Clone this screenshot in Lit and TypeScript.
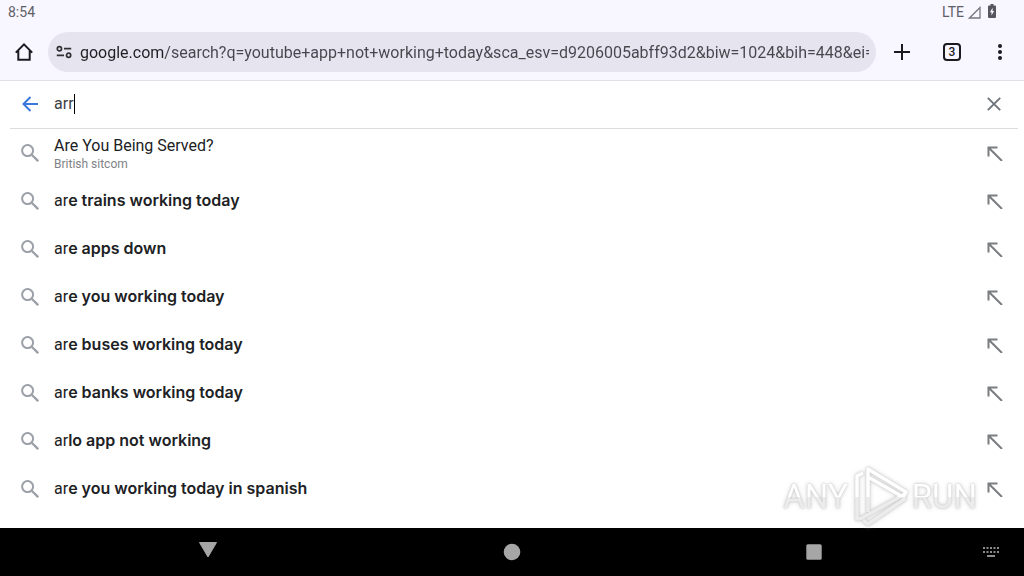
import { LitElement, html, css, svg } from "lit";
import { customElement, property } from "lit/decorators.js";

interface Suggestion {
  typed: string;
  rest: string;
  note?: string;
}

const SUGGESTIONS: Suggestion[] = [
  { typed: "Are You Being Served?", rest: "", note: "British sitcom" },
  { typed: "ar", rest: "e trains working today" },
  { typed: "ar", rest: "e apps down" },
  { typed: "ar", rest: "e you working today" },
  { typed: "ar", rest: "e buses working today" },
  { typed: "ar", rest: "e banks working today" },
  { typed: "ar", rest: "lo app not working" },
  { typed: "ar", rest: "e you working today in spanish" },
];

const buttonReset = css`
  *,
  *::before {
    box-sizing: border-box;
  }
  button {
    display: flex;
    align-items: center;
    justify-content: center;
    margin: 0;
    padding: 0;
    border: 0;
    background: none;
    color: inherit;
    font: inherit;
    cursor: pointer;
  }
  input {
    margin: 0;
    padding: 0;
    border: 0;
    outline: 0;
    background: none;
    font: inherit;
  }
  svg {
    display: block;
    flex: none;
  }
`;

@customElement("browser-bar")
export class BrowserBar extends LitElement {
  @property() url = "";

  static styles = [
    buttonReset,
    css`
      :host {
        display: block;
        background: #f8f6ff;
        color: #1b1b1f;
        font-family: Roboto, sans-serif;
        border-bottom: 1px solid #e1e0e7;
      }
      .status {
        display: flex;
        align-items: center;
        justify-content: space-between;
        height: 24px;
        padding: 0 28px 0 8px;
        font-size: 14px;
        line-height: 24px;
        color: #5f5e66;
      }
      .signals {
        display: flex;
        align-items: center;
        gap: 4px;
      }
      .battery {
        margin: 0 0 2px 3px;
      }
      .tools {
        display: flex;
        align-items: center;
        height: 56px;
      }
      .tool {
        width: 48px;
        height: 48px;
      }
      .actions {
        display: flex;
        gap: 2px;
        padding-left: 2px;
      }
      .menu {
        width: 46px;
        height: 48px;
        padding-right: 2px;
      }
      .address {
        flex: 1;
        min-width: 0;
        display: flex;
        align-items: center;
        height: 40px;
        padding-right: 7px;
        border-radius: 20px;
        background: #e6e4ee;
      }
      .site {
        width: 32px;
        height: 40px;
      }
      .url {
        flex: 1;
        min-width: 0;
        height: 25px;
        padding-top: 1px;
        font-size: 16px;
        line-height: 24px;
        color: #46464c;
        -webkit-text-fill-color: transparent;
        background: linear-gradient(to right, #1f1f23 83px, #46464c 83px);
        -webkit-background-clip: text;
        background-clip: text;
      }
      .tabs {
        width: 18px;
        height: 18px;
        border: 2px solid #1b1b1f;
        border-radius: 4px;
        font-size: 12px;
        font-weight: 500;
        line-height: 14px;
        text-align: center;
      }
    `,
  ];

  render() {
    return html`
      <div class="status">
        <span>8:54</span>
        <div class="signals">
          <span>LTE</span>
          <svg width="13" height="13" viewBox="0 0 13 13">
            <path d="M1.500 12 12 1.500V12Z" fill="none" stroke="#77767e" stroke-width="1.300" />
          </svg>
          <svg class="battery" width="8" height="14" viewBox="0 0 8 14">
            <path d="M2.500 0h3v1.500H7a1 1 0 0 1 1 1V13a1 1 0 0 1-1 1H1a1 1 0 0 1-1-1V2.500a1 1 0 0 1 1-1h1.500Z" fill="#57565d" />
            <path d="M4.600 3.800 1.900 8.300h1.600v3.200L6.100 7H4.600Z" fill="#f8f6ff" />
          </svg>
        </div>
      </div>
      <div class="tools">
        <button class="tool" aria-label="Home">
          <svg width="20" height="20" viewBox="0 0 20 20">
            <path d="M1.800 10.600 10 2.300l8.200 8.300M4.300 8.800v8.900h11.400V8.800" fill="none" stroke="#1b1b1f" stroke-width="2" />
          </svg>
        </button>
        <div class="address">
          <button class="site" aria-label="Site information">
            <svg width="16" height="14" viewBox="0 0 16 14" fill="none" stroke="#303035" stroke-width="1.700">
              <circle cx="3.400" cy="3.700" r="2.100" />
              <path d="M8 3.700h7.200M.8 10.300H8" />
              <circle cx="12.600" cy="10.300" r="2.100" />
            </svg>
          </button>
          <input class="url" type="text" aria-label="Address" .value=${this.url} />
        </div>
        <div class="actions">
          <button class="tool" aria-label="New tab">
            <svg width="18" height="18" viewBox="0 0 18 18">
              <path d="M9 1v16M1 9h16" stroke="#1b1b1f" stroke-width="2" />
            </svg>
          </button>
          <button class="tool" aria-label="Open tabs"><span class="tabs">3</span></button>
          <button class="menu" aria-label="Menu">
            <svg width="4" height="16" viewBox="0 0 4 16" fill="#1b1b1f">
              <circle cx="2" cy="2" r="2" />
              <circle cx="2" cy="8" r="2" />
              <circle cx="2" cy="14" r="2" />
            </svg>
          </button>
        </div>
      </div>
    `;
  }
}

@customElement("search-panel")
export class SearchPanel extends LitElement {
  @property({ attribute: false }) items: Suggestion[] = [];

  static styles = [
    buttonReset,
    css`
      :host {
        display: block;
        background: #fff;
        color: #202124;
        font-family: Roboto, sans-serif;
        font-size: 16px;
      }
      .query {
        display: flex;
        align-items: center;
        height: 48px;
        margin: 0 6px 0 10px;
        padding-bottom: 2px;
        border-bottom: 1px solid #dadce0;
      }
      .side {
        width: 40px;
        height: 40px;
      }
      .field {
        flex: 1;
        display: flex;
        align-items: center;
        padding-left: 4px;
      }
      .text {
        field-sizing: content;
        color: #3c4043;
        line-height: 24px;
      }
      .caret {
        width: 1px;
        height: 20px;
        background: #000;
      }
      .clear {
        width: 48px;
        height: 40px;
      }
      .list {
        margin: 0;
        padding: 0;
        list-style: none;
      }
      .row {
        display: flex;
        align-items: center;
        height: 48px;
        padding: 0 5px 0 10px;
      }
      .pick {
        flex: 1;
        min-width: 0;
        height: 48px;
        justify-content: flex-start;
        gap: 4px;
        text-align: left;
      }
      .lens {
        display: flex;
        justify-content: center;
        width: 40px;
      }
      .words {
        display: block;
        line-height: 20px;
        padding-bottom: 2px;
      }
      .words.noted {
        padding: 2px 0 0;
      }
      .words b {
        font-family: Inter, sans-serif;
        font-weight: 600;
      }
      .note {
        display: block;
        font-size: 12px;
        line-height: 16px;
        color: #808286;
      }
    `,
  ];

  render() {
    return html`
      <div class="query">
        <button class="side" aria-label="Back">
          <svg width="16" height="16" viewBox="0 0 16 16">
            <path d="M16 8H1.800M8.500 1 1.500 8l7 7" fill="none" stroke="#3b78dc" stroke-width="2" />
          </svg>
        </button>
        <label class="field">
          <input class="text" type="text" aria-label="Search" value="arr" />
          <span class="caret"></span>
        </label>
        <button class="clear" aria-label="Clear">
          <svg width="14" height="14" viewBox="0 0 14 14">
            <path d="m.8.8 12.400 12.400M13.200.8.8 13.200" stroke="#70757a" stroke-width="1.900" />
          </svg>
        </button>
      </div>
      <ul class="list">
        ${this.items.map(
          (s) => html`
            <li class="row">
              <button class="pick">
                <span class="lens">
                  <svg width="18" height="18" viewBox="0 0 18 18" fill="none" stroke="#9aa0a6">
                    <circle cx="6.600" cy="6.600" r="5.500" stroke-width="2" />
                    <path d="m10.700 10.700 6.500 6.500" stroke-width="2.300" />
                  </svg>
                </span>
                <span class=${s.note ? "words noted" : "words"}>${s.typed}${s.rest ? html`<b>${s.rest}</b>` : ""}${s.note ? html`<span class="note">${s.note}</span>` : ""}</span>
              </button>
              <button class="clear" aria-label="Use suggestion">
                <svg width="16" height="16" viewBox="0 0 16 16">
                  <path d="M1.500 11.500v-9h9M1.500 2.500 15 16" fill="none" stroke="#7a7d80" stroke-width="2" />
                </svg>
              </button>
            </li>
          `,
        )}
      </ul>
    `;
  }
}

@customElement("nav-keys")
export class NavKeys extends LitElement {
  static styles = [
    buttonReset,
    css`
      :host {
        display: grid;
        grid-template-columns: 56px 1fr 1fr 1fr 56px;
        height: 48px;
        background: #000;
      }
      .first {
        grid-column: 2;
      }
      .keyboard {
        padding-right: 10px;
      }
    `,
  ];

  render() {
    return html`
      <button class="first" aria-label="Back">
        <svg width="18" height="20" viewBox="0 0 18 20"><path d="M.5.500h17L9 15Z" fill="#a6a6a6" stroke="#a6a6a6" stroke-linejoin="round" /></svg>
      </button>
      <button aria-label="Home">
        <svg width="18" height="18" viewBox="0 0 18 18"><circle cx="9" cy="9" r="8.300" fill="#a6a6a6" /></svg>
      </button>
      <button aria-label="Overview">
        <svg width="20" height="16" viewBox="0 0 20 16"><rect x=".3" y=".3" width="15.400" height="15.400" rx="1.500" fill="#a6a6a6" /></svg>
      </button>
      <button class="keyboard" aria-label="Keyboard">
        <svg width="16" height="10" viewBox="0 0 16 10" fill="#8c8c8c">
          ${[0, 3.5, 7, 10.5, 14].map((x) => svg`<rect x=${x} y="0" width="2" height="2" /><rect x=${x} y="4" width="2" height="2" />`)}
          <rect x="4" y="8" width="8" height="2" />
        </svg>
      </button>
    `;
  }
}

@customElement("app-root")
export class AppRoot extends LitElement {
  static styles = css`
    :host {
      display: flex;
      flex-direction: column;
      min-height: 100vh;
      position: relative;
      background: #fff;
    }
    .body {
      flex: 1;
    }
    .mark {
      position: absolute;
      right: 47px;
      bottom: 48px;
      display: flex;
      align-items: center;
      gap: 3px;
      pointer-events: none;
      font-family: Roboto, sans-serif;
      font-size: 33px;
      line-height: 62px;
      filter: drop-shadow(0 0 1px #c4c4c4) drop-shadow(0 0 2px #dcdcdc);
    }
    .word {
      color: #f4f4f4;
      -webkit-text-fill-color: transparent;
      background: linear-gradient(#fff 50%, #ececec 50%);
      -webkit-background-clip: text;
      background-clip: text;
    }
    .logo {
      display: block;
    }
  `;

  render() {
    return html`
      <browser-bar
        url="google.com/search?q=youtube+app+not+working+today&sca_esv=d9206005abff93d2&biw=1024&bih=448&ei="
      ></browser-bar>
      <search-panel class="body" .items=${SUGGESTIONS}></search-panel>
      <nav-keys></nav-keys>
      <div class="mark">
        <span class="word">ANY</span>
        <svg class="logo" width="58" height="62" viewBox="0 0 58 62" fill="none" stroke="url(#fade)" stroke-width="3.500" stroke-linejoin="round">
          <defs>
            <linearGradient id="fade" gradientUnits="userSpaceOnUse" x1="0" y1="0" x2="0" y2="62">
              <stop offset=".5" stop-color="#fff" />
              <stop offset=".5" stop-color="#ececec" />
            </linearGradient>
          </defs>
          <path d="M17 34V3l38 23-3 5-35-20" />
          <path d="M12 7 6 10v43l5-1 43-24" />
          <path d="M55 32 17 58l-5-4" />
          <path d="M17 34v12" />
        </svg>
        <span class="word">RUN</span>
      </div>
    `;
  }
}
